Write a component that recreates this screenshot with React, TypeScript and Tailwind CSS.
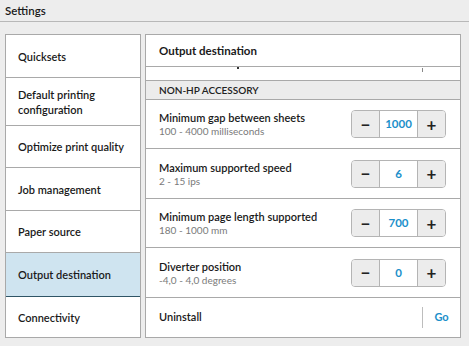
import React from 'react';

const menu = [
    { label: 'Quicksets', h: 'h-[43px]' },
    { label: 'Default printing configuration', h: 'h-[48px]' },
    { label: 'Optimize print quality', h: 'h-[42px]' },
    { label: 'Job management', h: 'h-[43px]' },
    { label: 'Paper source', h: 'h-[42px]' },
    { label: 'Output destination', h: 'h-[44px]', active: true },
    { label: 'Connectivity', h: 'h-[40px]' },
];

const settings = [
    { title: 'Minimum gap between sheets', range: '100 - 4000 milliseconds', value: '1000', h: 'h-[49px]' },
    { title: 'Maximum supported speed', range: '2 - 15 ips', value: '6', h: 'h-[50px]' },
    { title: 'Minimum page length supported', range: '180 - 1000 mm', value: '700', h: 'h-[49px]' },
    { title: 'Diverter position', range: '-4,0 - 4,0 degrees', value: '0', h: 'h-[50px]' },
];

function Stepper({ value }: { value: string }) {
    return (
        <div className="flex h-[28px] w-[95px] rounded-[4px] border border-[#b4b4b4] overflow-hidden">
            <div className="w-[27px] bg-[#ececec] flex items-center justify-center text-[#222] text-[17px] font-bold leading-none">−</div>
            <div className="flex-1 bg-white border-x border-[#b4b4b4] flex items-center justify-center text-[11.5px] text-[#1b8fca] font-bold">{value}</div>
            <div className="w-[27px] bg-[#ececec] flex items-center justify-center text-[#222] text-[17px] font-bold leading-none">+</div>
        </div>
    );
}

export default function App() {
    return (
        <div className="w-[469px] h-[346px] bg-[#ededed] flex flex-col text-[#1a1a1a]" style={{ fontFamily: 'Lato, "Open Sans", sans-serif' }}>
            {/* Title bar */}
            <div className="h-[22px] border-b border-[#b8b8b8] px-[5px] flex items-center text-[11.5px] font-semibold">Settings</div>

            <div className="flex flex-1 pt-[12px] pl-[5px] pr-[8px] pb-[8px] gap-[4px]">
                {/* Menu */}
                <div className="w-[136px] bg-white border border-[#a9a9a9] flex flex-col">
                    {menu.map((m, i) => (
                        <div
                            key={m.label}
                            className={`${m.h} flex items-center pl-[12px] pr-[4px] text-[11px] font-semibold leading-[15px] ${i < menu.length - 1 ? 'border-b' : ''} ${m.active ? 'bg-[#cfe4f0] border-[#2f5566]' : 'border-[#a9a9a9]'} ${menu[i + 1]?.active ? 'border-[#2f5566]' : ''}`}
                        >
                            {m.label}
                        </div>
                    ))}
                </div>

                {/* Content */}
                <div className="flex-1 bg-white border border-[#a9a9a9] flex flex-col">
                    <div className="h-[32px] border-b border-[#a9a9a9] flex items-center pl-[13px] text-[11.5px] font-bold">Output destination</div>
                    <div className="relative h-[14px] border-b border-[#a9a9a9]">
                        <div className="absolute left-[91px] top-0 w-[2px] h-[2px] bg-[#333]" />
                        <div className="absolute left-[276px] top-[1px] w-[1px] h-[4px] bg-[#888]" />
                    </div>
                    <div className="h-[19px] bg-[#ececec] border-b border-[#a9a9a9] flex items-center pl-[13px] text-[10px] font-semibold text-[#222]">NON-HP ACCESSORY</div>
                    {settings.map((s) => (
                        <div key={s.title} className={`${s.h} border-b border-[#a9a9a9] flex items-center pl-[13px] pr-[14px]`}>
                            <div className="flex-1 flex flex-col">
                                <span className="text-[11px] font-semibold leading-[15px]">{s.title}</span>
                                <span className="text-[10px] text-[#7a7a7a] leading-[13px]">{s.range}</span>
                            </div>
                            <Stepper value={s.value} />
                        </div>
                    ))}
                    <div className="flex-1 flex items-center pl-[13px]">
                        <span className="flex-1 text-[11px] font-semibold">Uninstall</span>
                        <div className="w-px h-[21px] bg-[#bdbdbd]" />
                        <span className="w-[37px] text-center text-[11px] font-bold text-[#1b8fca]">Go</span>
                    </div>
                </div>
            </div>
        </div>
    );
}
